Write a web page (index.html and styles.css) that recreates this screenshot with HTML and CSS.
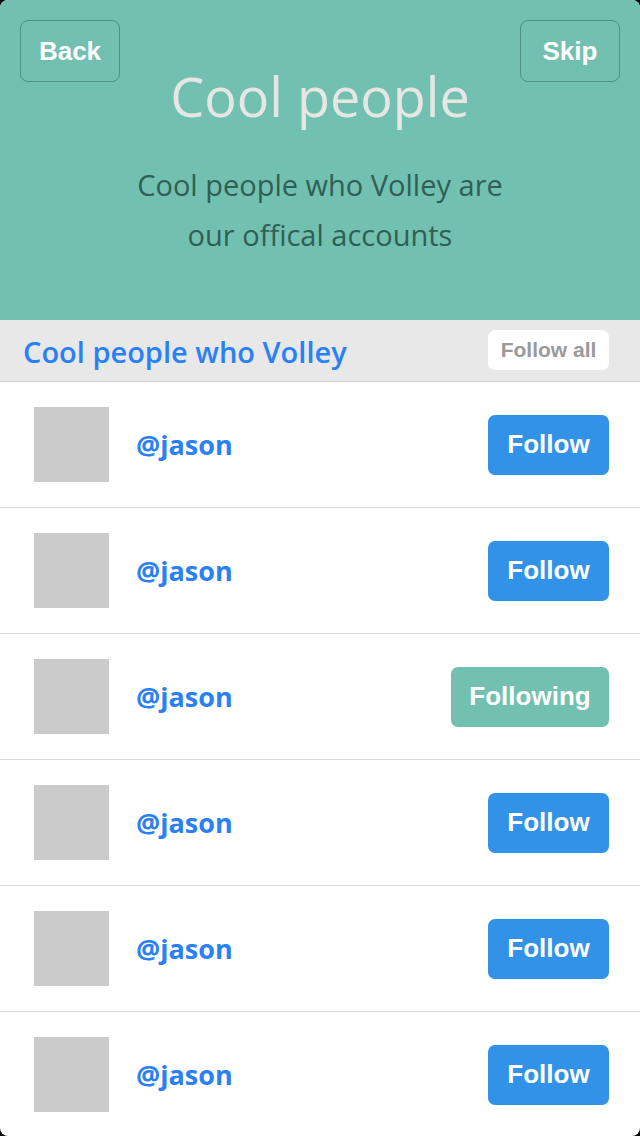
FILE: index.html
```html
<!DOCTYPE html>
<html>
<head>
<meta charset="utf-8">
<link rel="stylesheet" href="styles.css">
</head>
<body>
<div class="app">
  <header class="hero">
    <div class="hero-bar">
      <button class="nav-btn">Back</button>
      <button class="nav-btn">Skip</button>
    </div>
    <h1 class="hero-title">Cool people</h1>
    <p class="hero-sub">Cool people who Volley are<br>our offical accounts</p>
  </header>
  <div class="section-head">
    <span class="section-title">Cool people who Volley</span>
    <button class="follow-all">Follow all</button>
  </div>
  <ul class="list">
    <li class="row"><div class="avatar"></div><span class="name">@jason</span><button class="btn follow">Follow</button></li>
    <li class="row"><div class="avatar"></div><span class="name">@jason</span><button class="btn follow">Follow</button></li>
    <li class="row"><div class="avatar"></div><span class="name">@jason</span><button class="btn following">Following</button></li>
    <li class="row"><div class="avatar"></div><span class="name">@jason</span><button class="btn follow">Follow</button></li>
    <li class="row"><div class="avatar"></div><span class="name">@jason</span><button class="btn follow">Follow</button></li>
    <li class="row"><div class="avatar"></div><span class="name">@jason</span><button class="btn follow">Follow</button></li>
  </ul>
</div>
</body>
</html>
```
FILE: styles.css
```css
* { box-sizing: border-box; }
html, body { margin: 0; padding: 0; background: #000; }
.app {
  width: 640px;
  height: 1136px;
  background: #fff;
  border-radius: 8px;
  overflow: hidden;
  display: flex;
  flex-direction: column;
}
.hero {
  flex: 0 0 320px;
  height: 320px;
  background: #72c1b0;
  padding: 20px 20px 0;
  display: flex;
  flex-direction: column;
  align-items: center;
  position: relative;
}
.hero-bar {
  position: absolute;
  top: 20px; left: 20px; right: 20px;
  display: flex;
  justify-content: space-between;
}
.nav-btn {
  width: 100px;
  height: 62px;
  background: transparent;
  border: 1px solid #4f9284;
  border-radius: 8px;
  color: #fff;
  font-family: "Liberation Sans", Arial, sans-serif;
  font-weight: bold;
  font-size: 26px;
  padding: 0;
}
.hero-title {
  margin: 44px 0 0;
  font-family: "Open Sans", sans-serif;
  font-weight: normal;
  font-size: 54px;
  line-height: 64px;
  color: #e6e6e6;
}
.hero-sub {
  margin: 32px 0 0;
  font-family: "Open Sans", sans-serif;
  font-size: 29px;
  line-height: 50px;
  color: #2f5f55;
  text-align: center;
}
.section-head {
  flex: 0 0 62px;
  height: 62px;
  background: #e8e8e8;
  border-bottom: 1px solid #cfcfcf;
  display: flex;
  align-items: center;
  justify-content: space-between;
  padding: 0 31px 0 23px;
}
.section-title {
  font-family: "Open Sans", sans-serif;
  font-weight: 600;
  font-size: 29px;
  color: #2a80f6;
  margin-top: 2px;
}
.follow-all {
  width: 121px;
  height: 40px;
  background: #fff;
  border: 0;
  border-radius: 7px;
  color: #9a9a9a;
  font-family: "Liberation Sans", Arial, sans-serif;
  font-weight: bold;
  font-size: 21px;
  padding: 0;
  margin-top: -2px;
}
.list { list-style: none; margin: 0; padding: 0; flex-shrink: 0; }
.row {
  height: 126px;
  border-bottom: 1px solid #dcdcdc;
  display: flex;
  align-items: center;
  padding: 0 31px 0 34px;
}
.avatar {
  width: 75px;
  height: 75px;
  background: #cbcbcb;
}
.name {
  flex: 1;
  margin-left: 27px;
  font-family: "Open Sans", sans-serif;
  font-weight: 700;
  font-size: 27px;
  color: #2a80f6;
}
.btn {
  height: 60px;
  border: 0;
  border-radius: 7px;
  color: #fff;
  font-family: "Liberation Sans", Arial, sans-serif;
  font-weight: bold;
  font-size: 26px;
  padding: 0;
}
.follow { width: 121px; background: #3192e8; }
.following { width: 158px; background: #72c1b0; }
```
